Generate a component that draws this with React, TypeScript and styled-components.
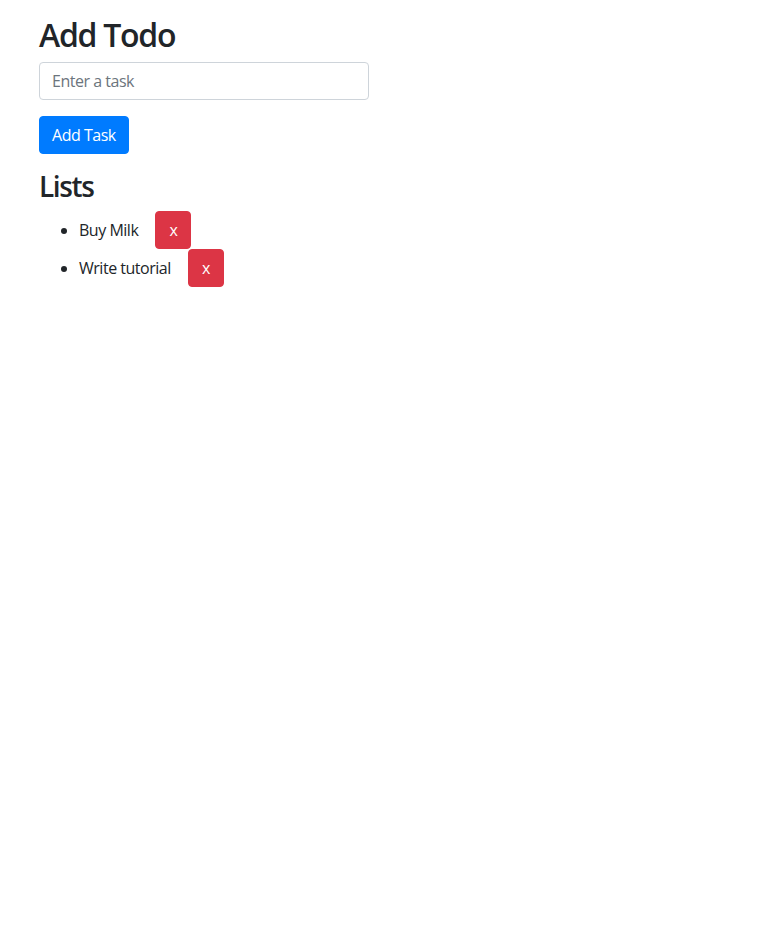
import React from "react";
import styled, { createGlobalStyle } from "styled-components";

const Global = createGlobalStyle`
  html, body { margin: 0; padding: 0; background: #fff; }
  body {
    font-family: "Open Sans", "Noto Sans", sans-serif;
    font-size: 16px;
    line-height: 1.5;
    color: #212529;
    letter-spacing: -0.03em;
  }
  * { box-sizing: border-box; }
`;

const Container = styled.div`
  width: 720px;
  margin: 0 auto;
  padding: 16px 15px 0;
`;

const Column = styled.div`
  width: 330px;
`;

const Title = styled.h2`
  margin: 0 0 8px;
  font-size: 32px;
  font-weight: 600;
  line-height: 1.2;
  letter-spacing: -0.04em;
`;

const SubTitle = styled.h3`
  margin: 0 0 7px;
  font-size: 28px;
  font-weight: 600;
  line-height: 1.2;
  letter-spacing: -0.05em;
`;

const FormGroup = styled.div`
  margin-bottom: 16px;
`;

const Input = styled.input`
  display: block;
  width: 100%;
  height: 38px;
  padding: 6px 12px;
  font: inherit;
  letter-spacing: inherit;
  color: #495057;
  border: 1px solid #ced4da;
  border-radius: 4px;
  outline: none;
  &::placeholder { color: #6c757d; opacity: 1; }
`;

const Button = styled.button<{ $variant: "primary" | "danger" }>`
  display: inline-block;
  min-width: 36px;
  padding: 6px 12px;
  font: inherit;
  letter-spacing: inherit;
  line-height: 24px;
  color: #fff;
  text-align: center;
  background: ${(p) => (p.$variant === "primary" ? "#007bff" : "#dc3545")};
  border: 1px solid ${(p) => (p.$variant === "primary" ? "#007bff" : "#dc3545")};
  border-radius: 4px;
  cursor: pointer;
`;

const List = styled.ul`
  margin: 0;
  padding-left: 40px;
`;

const Item = styled.li`
  height: 38px;
`;

const ItemText = styled.span`
  margin-right: 17px;
`;

export default function App() {
  const todos = ["Buy Milk", "Write tutorial"];
  return (
    <>
      <Global />
      <Container>
        <Column>
          <Title>Add Todo</Title>
          <FormGroup>
            <Input placeholder="Enter a task" />
          </FormGroup>
          <FormGroup>
            <Button $variant="primary">Add Task</Button>
          </FormGroup>
          <SubTitle>Lists</SubTitle>
          <List>
            {todos.map((t) => (
              <Item key={t}>
                <ItemText>{t}</ItemText>
                <Button $variant="danger">x</Button>
              </Item>
            ))}
          </List>
        </Column>
      </Container>
    </>
  );
}
